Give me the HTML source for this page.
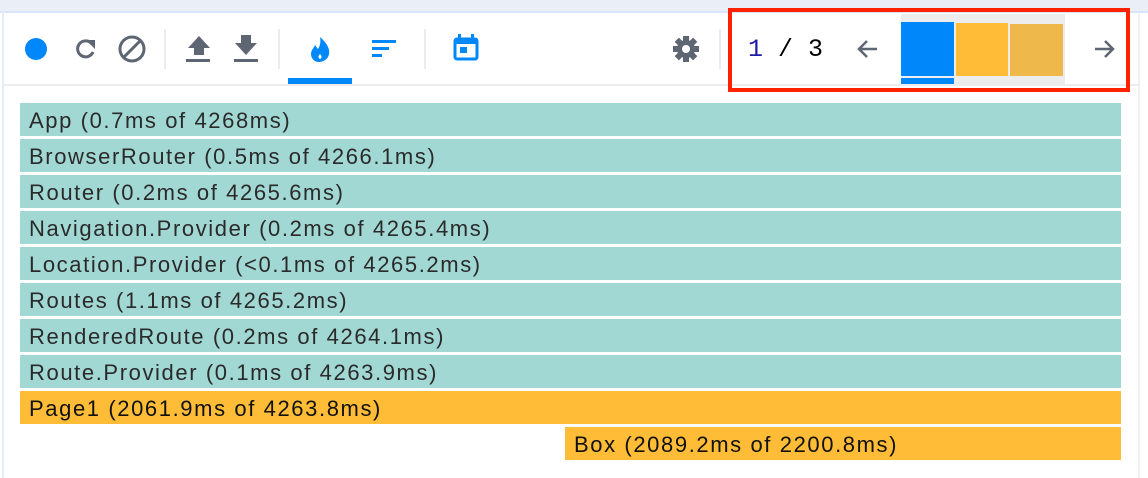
<!DOCTYPE html><html><head><style>
body{margin:0;width:1148px;height:478px;background:#fff;position:relative;overflow:hidden;font-family:"Liberation Sans",sans-serif}
.a{position:absolute}
.bar{position:absolute;left:20px;width:1101px;height:33px;background:#a2d8d3;color:#2a2a2a;font-size:22px;letter-spacing:1.6px;line-height:35px;padding-left:9px;box-sizing:border-box;white-space:nowrap}
.y{background:#ffbc37;color:#111}
.sep{position:absolute;top:29px;width:2px;height:40px;background:#ececec}
</style></head><body>
<div class="a" style="left:0;top:0;width:1148px;height:11px;background:#eaeef7"></div>
<div class="a" style="left:0;top:11px;width:1148px;height:2px;background:#d9e5fb"></div>
<div class="a" style="left:2px;top:11px;width:2px;height:467px;background:#e4ebf9"></div>
<div class="a" style="left:1138px;top:13px;width:2px;height:465px;background:#f0f0f0"></div>
<div class="a" style="left:4px;top:84px;width:1134px;height:2px;background:#ededed"></div>
<svg class="a" style="left:0;top:13px" width="720" height="72" viewBox="0 13 720 72">
<circle cx="36" cy="49" r="11" fill="#0088fa"/>
<path d="M92 44 A8 8 0 1 0 93 52" fill="none" stroke="#5f6673" stroke-width="3"/>
<path d="M86 40 L95 40 L95 49 Z" fill="#5f6673"/>
<circle cx="132" cy="49" r="12" fill="none" stroke="#5f6673" stroke-width="3"/>
<path d="M124 57 L140 41" stroke="#5f6673" stroke-width="3"/>
<path d="M199 36 L210 48 L204 48 L204 55 L194 55 L194 48 L188 48 Z" fill="#5f6673"/><rect x="186" y="59" width="24" height="3" fill="#5f6673"/>
<path d="M241 35 L251 35 L251 43 L257 43 L246 55 L235 43 L241 43 Z" fill="#5f6673"/><rect x="234" y="59" width="24" height="3" fill="#5f6673"/>
<path d="M320 37 C328 44 330 50 329 54 C328 60 322 62 319 62 C314 62 311 58 311 54 C311 50 314 48 315 45 C317 48 318 49 318 49 C320 46 321 42 320 37 Z M320 54 C318 56 318 58 320 59 C322 58 322 56 320 54 Z" fill="#0088fa" fill-rule="evenodd"/>
<rect x="372" y="40" width="24" height="3" fill="#0088fa"/><rect x="372" y="47" width="17" height="3" fill="#0088fa"/><rect x="372" y="54" width="10" height="3" fill="#0088fa"/>
<rect x="455" y="39" width="22" height="20" rx="2" fill="none" stroke="#0088fa" stroke-width="3"/><rect x="455" y="39" width="22" height="5" fill="#0088fa"/><rect x="458" y="34" width="3" height="5" fill="#0088fa"/><rect x="471" y="34" width="3" height="5" fill="#0088fa"/><rect x="460" y="47" width="7" height="6" fill="#0088fa"/>
<g transform="translate(686,49)" fill="#5f6673"><circle r="9"/><g><rect x="-3" y="-13" width="6" height="26"/><rect x="-3" y="-13" width="6" height="26" transform="rotate(45)"/><rect x="-3" y="-13" width="6" height="26" transform="rotate(90)"/><rect x="-3" y="-13" width="6" height="26" transform="rotate(135)"/></g><circle r="4" fill="#fff"/></g>
</svg>
<div class="sep" style="left:164px"></div><div class="sep" style="left:278px"></div><div class="sep" style="left:424px"></div><div class="sep" style="left:719px"></div>
<div class="a" style="left:288px;top:78px;width:64px;height:6px;background:#0088fa"></div>
<div class="a" style="left:728px;top:8px;width:402px;height:84px;border:4px solid #ff2200;box-sizing:border-box"></div>
<div class="a" style="left:748px;top:35px;font-family:'Liberation Mono',monospace;font-size:25px;white-space:pre"><span style="color:#1a1aa6">1</span> / 3</div>
<svg class="a" style="left:855px;top:36px" width="26" height="26"><path d="M22 13 H4 M12 5 L4 13 L12 21" fill="none" stroke="#5f6673" stroke-width="2.5"/></svg>
<svg class="a" style="left:1091px;top:36px" width="26" height="26"><path d="M4 13 H22 M14 5 L22 13 L14 21" fill="none" stroke="#5f6673" stroke-width="2.5"/></svg>
<div class="a" style="left:901px;top:14px;width:164px;height:70px;background:#ededed"></div>
<div class="a" style="left:901px;top:22px;width:53px;height:54px;background:#0088fa"></div>
<div class="a" style="left:901px;top:78px;width:53px;height:6px;background:#0088fa"></div>
<div class="a" style="left:956px;top:23px;width:52px;height:53px;background:#ffbc37"></div>
<div class="a" style="left:1010px;top:24px;width:53px;height:52px;background:#eeb94a"></div>
<div class="bar" style="top:103px">App (0.7ms of 4268ms)</div>
<div class="bar" style="top:139px">BrowserRouter (0.5ms of 4266.1ms)</div>
<div class="bar" style="top:175px">Router (0.2ms of 4265.6ms)</div>
<div class="bar" style="top:211px">Navigation.Provider (0.2ms of 4265.4ms)</div>
<div class="bar" style="top:247px">Location.Provider (&lt;0.1ms of 4265.2ms)</div>
<div class="bar" style="top:283px">Routes (1.1ms of 4265.2ms)</div>
<div class="bar" style="top:319px">RenderedRoute (0.2ms of 4264.1ms)</div>
<div class="bar" style="top:355px">Route.Provider (0.1ms of 4263.9ms)</div>
<div class="bar y" style="top:391px">Page1 (2061.9ms of 4263.8ms)</div>
<div class="bar y" style="top:427px;left:565px;width:556px">Box (2089.2ms of 2200.8ms)</div>
</body></html>
